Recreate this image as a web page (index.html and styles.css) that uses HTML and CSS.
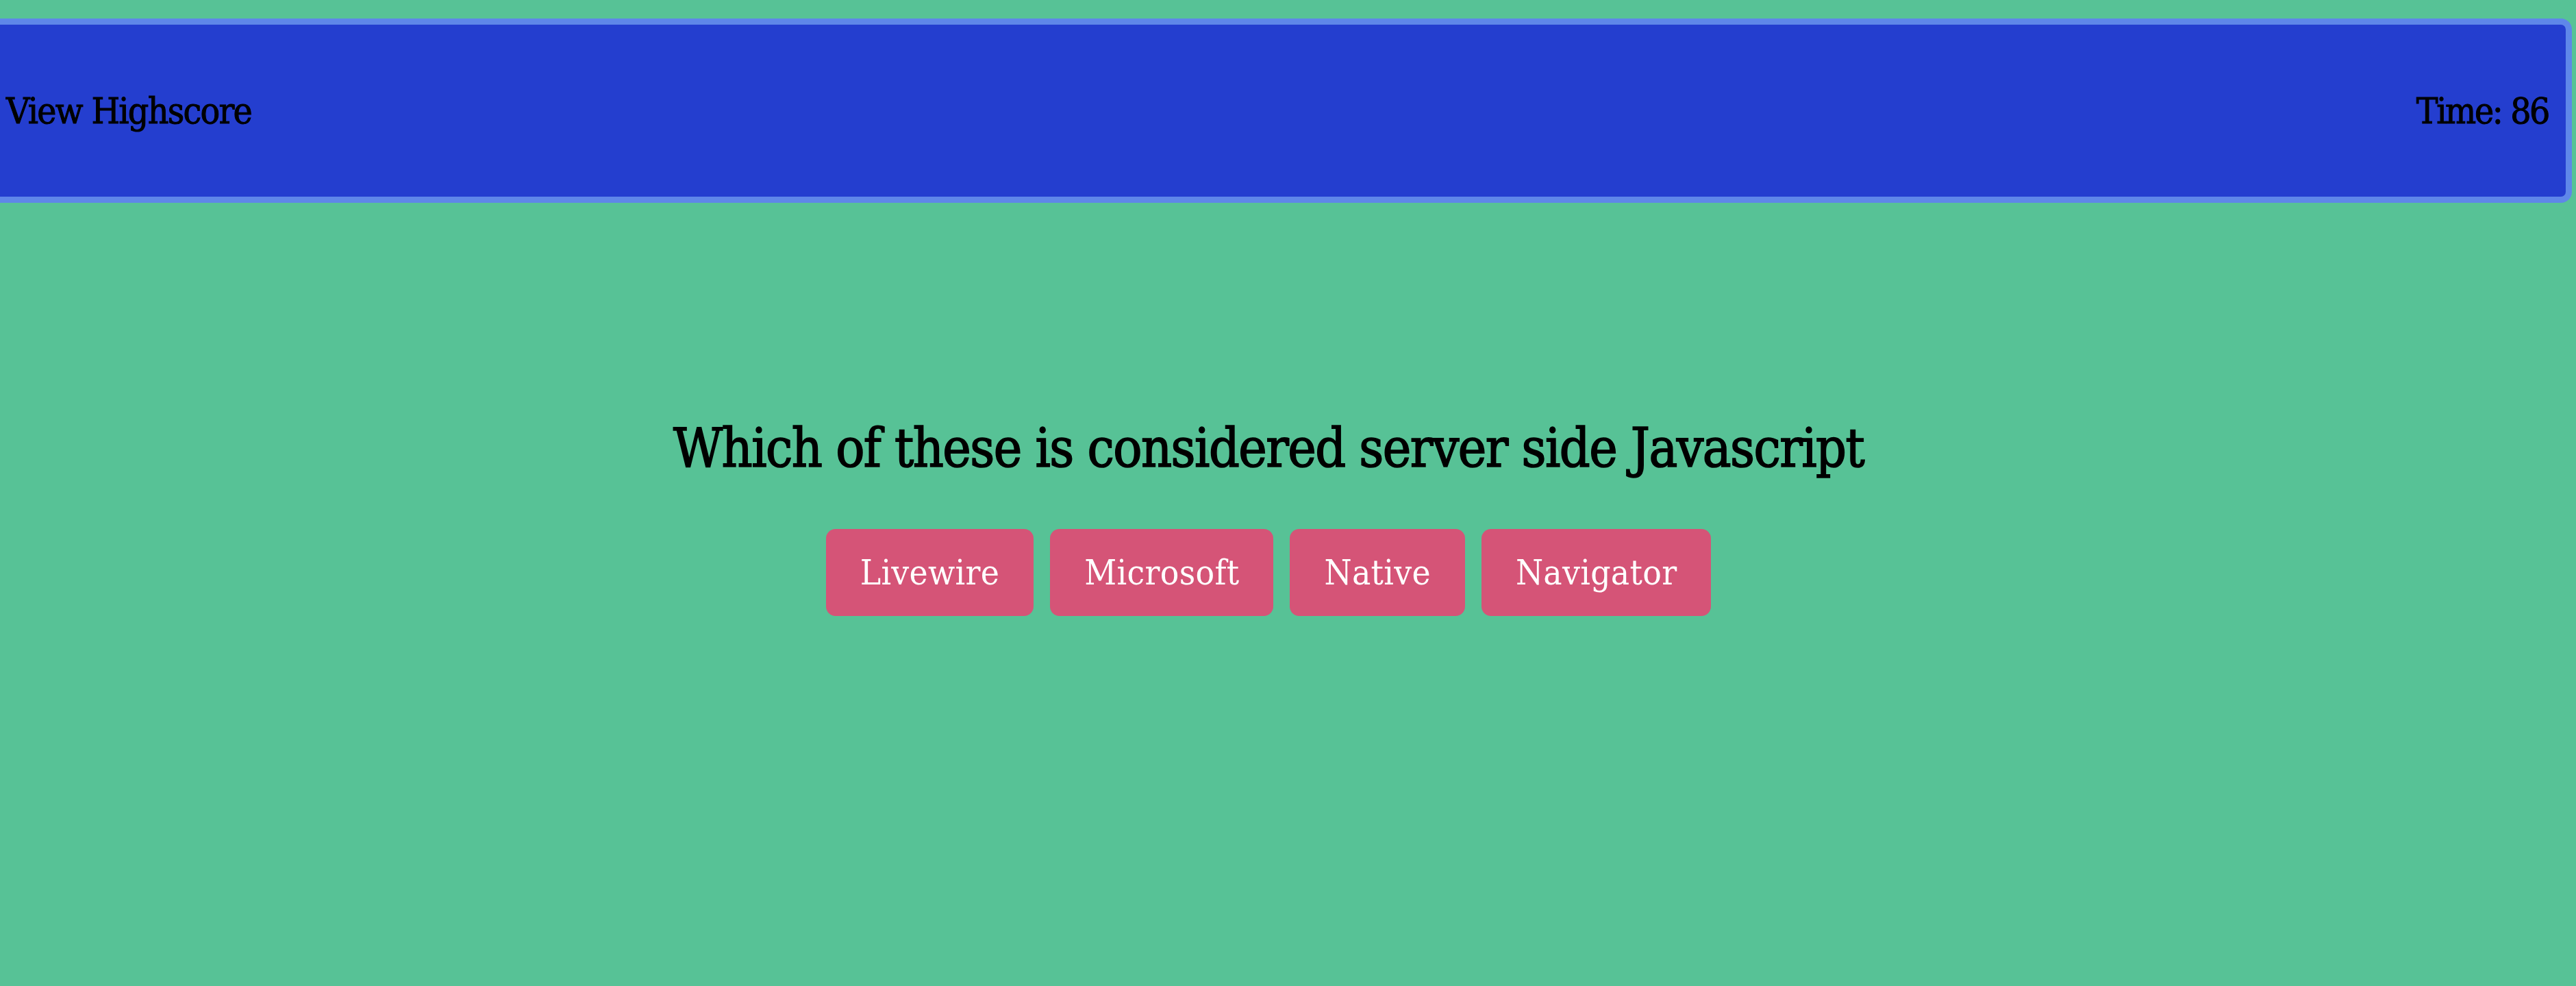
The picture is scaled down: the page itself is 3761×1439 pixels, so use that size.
FILE: index.html
```html
<!DOCTYPE html>
<html lang="en">
<head>
<meta charset="utf-8">
<title>Code Quiz</title>
<link rel="stylesheet" href="styles.css">
</head>
<body>
<div class="page">
  <header class="topbar">
    <span class="highscore">View Highscore</span>
    <span class="timer">Time: 86</span>
  </header>
  <main class="quiz">
    <h2 class="question">Which of these is considered server side Javascript</h2>
    <div class="choices">
      <button class="choice">Livewire</button>
      <button class="choice">Microsoft</button>
      <button class="choice">Native</button>
      <button class="choice">Navigator</button>
    </div>
  </main>
</div>
</body>
</html>
```

FILE: styles.css
```css
html, body {
  margin: 0;
  padding: 0;
  background: #57c296;
  font-family: "DejaVu Serif", "Liberation Serif", serif;
  font-stretch: condensed;
  color: #000;
  overflow: hidden;
}
.page {
  margin: 0 6px 0 -51px;
  min-height: 1439px;
}
.topbar {
  margin-top: 27px;
  height: 251px;
  border: 9px solid #5f87e9;
  border-radius: 16px;
  background: #243ecf;
  display: flex;
  align-items: center;
  justify-content: space-between;
  padding: 0 25px 0 51px;
  font-size: 53px;
  letter-spacing: -1.7px;
  -webkit-text-stroke: 1px #000;
}
.timer {
  letter-spacing: -2.4px;
}
.quiz {
  display: flex;
  flex-direction: column;
  align-items: center;
  padding-top: 312px;
}
.question {
  margin: 0;
  font-size: 78px;
  font-weight: normal;
  line-height: 1.2;
  letter-spacing: -1.55px;
  -webkit-text-stroke: 1.6px #000;
}
.choices {
  display: flex;
  gap: 24px;
  margin-top: 70px;
}
.choice {
  height: 127px;
  padding: 0 50px;
  border: none;
  border-radius: 14px;
  background: #d55477;
  color: #fff;
  font-family: inherit;
  font-stretch: inherit;
  font-size: 51px;
  letter-spacing: 0.3px;
}
```
